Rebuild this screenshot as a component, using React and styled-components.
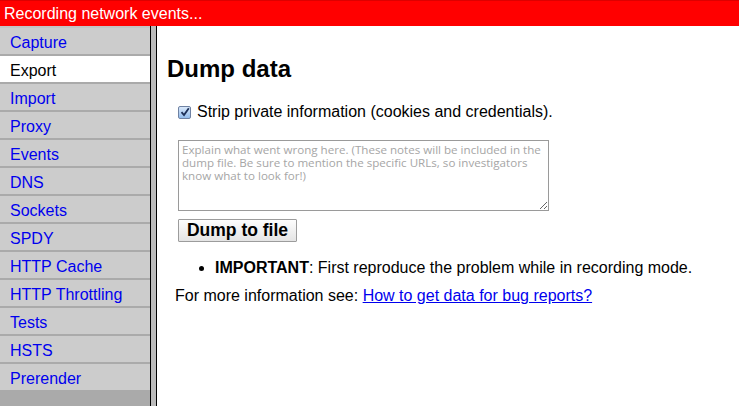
import React from 'react';
import styled, {createGlobalStyle} from 'styled-components';

const GlobalStyle = createGlobalStyle`
  html, body {
    margin: 0;
    padding: 0;
    height: 100%;
  }
  body {
    font-family: "Liberation Sans", Arial, sans-serif;
    font-size: 16px;
    background: #fff;
  }
  #root {
    height: 100%;
  }
`

const tabs = [
    'Capture', 'Export', 'Import', 'Proxy', 'Events', 'DNS', 'Sockets',
    'SPDY', 'HTTP Cache', 'HTTP Throttling', 'Tests', 'HSTS', 'Prerender',
]

const Page = styled.div`
  display: flex;
  flex-direction: column;
  height: 100%;
`

const StatusBar = styled.div`
  height: 26px;
  line-height: 25px;
  padding-left: 4px;
  background: #f00;
  color: #fff;
  font-size: 16px;
  border-top: 1px solid #d00;
  box-sizing: border-box;
`

const Main = styled.div`
  flex: 1;
  display: flex;
  min-height: 0;
`

const Sidebar = styled.div`
  width: 150px;
  display: flex;
  flex-direction: column;
  background: #aaa;
  border-top: 2px solid #c4c4c4;
`

const Tab = styled.a`
  display: block;
  height: 23px;
  padding: 3px 0 0 10px;
  line-height: 24px;
  border-bottom: 2px solid #aaa;
  background: ${p => p.selected ? '#fff' : '#ccc'};
  color: ${p => p.selected ? '#000' : '#00e'};
  text-decoration: none;
  white-space: nowrap;
`

const Splitter = styled.div`
  width: 5px;
  background: #bbb;
  border-left: 1px solid #000;
  border-right: 1px solid #000;
`

const Content = styled.div`
  flex: 1;
  padding: 29px 0 0 10px;
`

const Heading = styled.h2`
  margin: 0;
  font-size: 24px;
  font-weight: bold;
  line-height: 27px;
`

const Body = styled.div`
  margin-left: 8px;
`

const CheckRow = styled.label`
  display: flex;
  align-items: center;
  margin-top: 21px;
  gap: 6px;
  line-height: 18px;
`

const CheckBox = styled.span`
  width: 11px;
  height: 11px;
  margin-left: 3px;
  border: 1px solid #6f82a3;
  border-radius: 2px;
  background: linear-gradient(#d9e8fa, #93bcec);
  display: flex;
  align-items: center;
  justify-content: center;
`

const Notes = styled.textarea`
  display: block;
  margin: 19px 0 0 3px;
  width: 371px;
  height: 71px;
  box-sizing: border-box;
  border: 1px solid #9a9a9a;
  padding: 2px 3px;
  font-family: "Open Sans", "Noto Sans", sans-serif;
  font-size: 11.6px;
  line-height: 13px;
  resize: both;
  &::placeholder {
    color: #a6a6a6;
  }
`

const DumpButton = styled.button`
  display: block;
  margin: 8px 0 0 3px;
  width: 119px;
  height: 23px;
  padding: 0;
  border: 1px solid #9c9c9c;
  border-radius: 1px;
  background: linear-gradient(#fdfdfd, #e4e4e4);
  font-family: "Liberation Sans", Arial, sans-serif;
  font-weight: bold;
  font-size: 17.5px;
  color: #000;
`

const Notice = styled.ul`
  margin: 17px 0 10px;
  padding-left: 40px;
  line-height: 18px;
`

const MoreInfo = styled.div`
  line-height: 18px;
  a {
    color: #00e;
  }
`

const App = () => <Page>
    <GlobalStyle/>
    <StatusBar>Recording network events...</StatusBar>
    <Main>
        <Sidebar>
            {tabs.map(t => <Tab key={t} href="#" selected={t === 'Export'}>{t}</Tab>)}
        </Sidebar>
        <Splitter/>
        <Content>
            <Heading>Dump data</Heading>
            <Body>
                <CheckRow>
                    <CheckBox>
                        <svg width="10" height="10" viewBox="0 0 10 10">
                            <path d="M1.5 5.2 L4 8 L8.8 1.2" fill="none" stroke="#1d2f57" strokeWidth="1.8"/>
                        </svg>
                    </CheckBox>
                    Strip private information (cookies and credentials).
                </CheckRow>
                <Notes placeholder={"Explain what went wrong here. (These notes will be included in the\ndump file. Be sure to mention the specific URLs, so investigators\nknow what to look for!)"}/>
                <DumpButton>Dump to file</DumpButton>
                <Notice>
                    <li><b>IMPORTANT</b>: First reproduce the problem while in recording mode.</li>
                </Notice>
                <MoreInfo>
                    For more information see: <a href="#">How to get data for bug reports?</a>
                </MoreInfo>
            </Body>
        </Content>
    </Main>
</Page>

export default App;
